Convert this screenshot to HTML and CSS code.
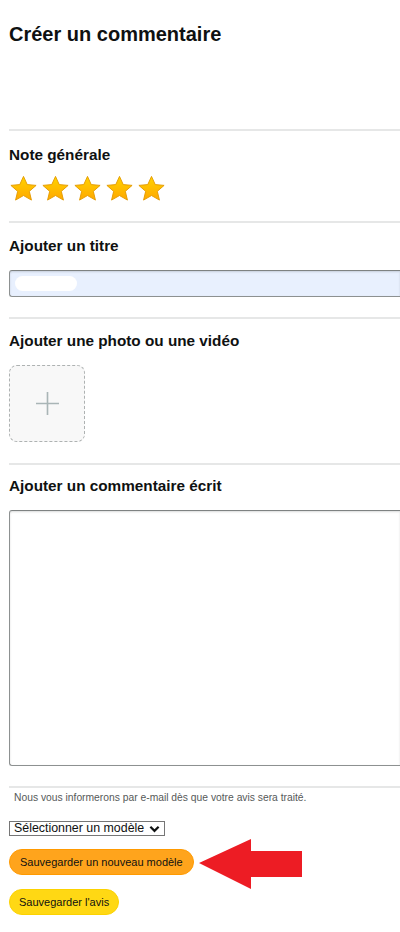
FILE: index.html
```html
<!DOCTYPE html>
<html lang="fr">
<head>
<meta charset="utf-8">
<title>Créer un commentaire</title>
<link rel="stylesheet" href="styles.css">
</head>
<body>
<div class="page">
  <h1 class="title">Créer un commentaire</h1>

  <section class="sec sec-rating">
    <h2 class="label">Note générale</h2>
    <div class="stars">
      <svg class="star" viewBox="0 0 24 24"><defs><linearGradient id="sg" x1="0" y1="0" x2="0" y2="1"><stop offset="0" stop-color="#ffd300"/><stop offset="1" stop-color="#ffa800"/></linearGradient></defs><path d="M12 1.2l3.2 7 7.6.7-5.8 5.1 1.8 7.5L12 17.6l-6.8 3.9 1.8-7.5L1.2 8.9l7.6-.7z" fill="url(#sg)" stroke="#e39a00" stroke-width=".8" stroke-linejoin="round"/></svg>
      <svg class="star" viewBox="0 0 24 24"><path d="M12 1.2l3.2 7 7.6.7-5.8 5.1 1.8 7.5L12 17.6l-6.8 3.9 1.8-7.5L1.2 8.9l7.6-.7z" fill="url(#sg)" stroke="#e39a00" stroke-width=".8" stroke-linejoin="round"/></svg>
      <svg class="star" viewBox="0 0 24 24"><path d="M12 1.2l3.2 7 7.6.7-5.8 5.1 1.8 7.5L12 17.6l-6.8 3.9 1.8-7.5L1.2 8.9l7.6-.7z" fill="url(#sg)" stroke="#e39a00" stroke-width=".8" stroke-linejoin="round"/></svg>
      <svg class="star" viewBox="0 0 24 24"><path d="M12 1.2l3.2 7 7.6.7-5.8 5.1 1.8 7.5L12 17.6l-6.8 3.9 1.8-7.5L1.2 8.9l7.6-.7z" fill="url(#sg)" stroke="#e39a00" stroke-width=".8" stroke-linejoin="round"/></svg>
      <svg class="star" viewBox="0 0 24 24"><path d="M12 1.2l3.2 7 7.6.7-5.8 5.1 1.8 7.5L12 17.6l-6.8 3.9 1.8-7.5L1.2 8.9l7.6-.7z" fill="url(#sg)" stroke="#e39a00" stroke-width=".8" stroke-linejoin="round"/></svg>
    </div>
  </section>

  <section class="sec sec-titre">
    <h2 class="label">Ajouter un titre</h2>
    <div class="input"><span class="redact"></span></div>
  </section>

  <section class="sec sec-media">
    <h2 class="label">Ajouter une photo ou une vidéo</h2>
    <div class="upload">
      <svg class="plus" viewBox="0 0 24 24"><path d="M12 0v24M0 12h24" stroke="#a9b5b6" stroke-width="1.7" fill="none"/></svg>
    </div>
  </section>

  <section class="sec sec-comment">
    <h2 class="label">Ajouter un commentaire écrit</h2>
    <div class="textarea"></div>
  </section>

  <section class="sec sec-footer">
    <p class="note">Nous vous informerons par e-mail dès que votre avis sera traité.</p>
    <div class="select">
      <span class="select-text">Sélectionner un modèle</span>
      <svg class="chev" viewBox="0 0 12 8"><path d="M1.5 1.5L6 6l4.5-4.5" stroke="#0f1111" stroke-width="2.4" fill="none"/></svg>
    </div>
    <div class="btn-row">
      <button class="btn btn-orange">Sauvegarder un nouveau modèle</button>
      <svg class="arrow" viewBox="0 0 103 50"><polygon points="0,24 52,0 52,12 103,12 103,38 52,38 52,50" fill="#ed1c24"/></svg>
    </div>
    <button class="btn btn-yellow">Sauvegarder l'avis</button>
  </section>
</div>
</body>
</html>
```

FILE: styles.css
```css
html, body {
  margin: 0;
  padding: 0;
  background: #ffffff;
}

body {
  font-family: "Liberation Sans", Arial, sans-serif;
  color: #0f1111;
}

.page {
  width: 391px;
  padding-left: 9px;
}

.title {
  margin: 0;
  padding-top: 22px;
  font-size: 20px;
  line-height: 24px;
  font-weight: 700;
  height: 107px;
  box-sizing: content-box;
}

.sec {
  border-top: 2px solid #e6e7e7;
}

.label {
  margin: 0;
  font-size: 15.3px;
  line-height: 20px;
  font-weight: 700;
}

.sec-rating {
  padding: 14px 0 18px;
}

.stars {
  display: flex;
  gap: 3px;
  margin-top: 10px;
}

.star {
  width: 29px;
  height: 28px;
  display: block;
}

.sec-titre {
  padding: 13px 0 20px;
}

.input {
  margin-top: 14px;
  height: 27px;
  box-sizing: border-box;
  background: #e8f0fe;
  border: 1px solid #8d9191;
  border-right: none;
  border-top-color: #7e8282;
  border-radius: 3px 0 0 3px;
  box-shadow: inset 0 1px 2px rgba(15, 17, 17, 0.15);
  padding: 5px 5px;
}

.redact {
  display: block;
  width: 62px;
  height: 15px;
  background: #ffffff;
  border-radius: 8px;
}

.sec-media {
  padding: 12px 0 21px;
}

.upload {
  margin-top: 14px;
  width: 76px;
  height: 77px;
  box-sizing: border-box;
  border: 1px dashed #aeb2b2;
  border-radius: 8px;
  background: #f8f8f8;
  display: flex;
  align-items: center;
  justify-content: center;
}

.plus {
  width: 23px;
  height: 23px;
}

.sec-comment {
  padding: 11px 0 20px;
}

.textarea {
  margin-top: 14px;
  height: 256px;
  box-sizing: border-box;
  background: #ffffff;
  border: 1px solid #8d9191;
  border-right: none;
  border-top-color: #7e8282;
  border-radius: 3px 0 0 3px;
  box-shadow: inset 0 1px 2px rgba(15, 17, 17, 0.15);
}

.sec-footer {
  padding: 3px 0 0;
}

.note {
  margin: 0;
  padding-left: 5px;
  font-size: 10.3px;
  line-height: 14px;
  color: #565959;
}

.select {
  margin-top: 16px;
  display: inline-flex;
  align-items: center;
  gap: 5px;
  height: 15px;
  box-sizing: border-box;
  border: 1px solid #767676;
  padding: 0 4px 0 4px;
  font-size: 12.4px;
  line-height: 13px;
  color: #0f1111;
}

.chev {
  width: 11px;
  height: 8px;
  display: block;
}

.btn-row {
  display: flex;
  align-items: center;
  gap: 5px;
  margin-top: 13px;
}

.btn {
  font-family: "Liberation Sans", Arial, sans-serif;
  font-size: 11px;
  color: #0f1111;
  border: 1px solid transparent;
  border-radius: 13px;
  height: 26px;
  padding: 0 10px;
  display: block;
  cursor: pointer;
}

.btn-orange {
  background: #ffa41c;
  border-color: #ff9a00;
}

.arrow {
  width: 103px;
  height: 50px;
  margin: -12px 0 -12px;
  position: relative;
  top: 2px;
  display: block;
}

.btn-yellow {
  margin-top: 14px;
  background: #ffd814;
  border-color: #fcd200;
  padding: 0 9px;
}
```
